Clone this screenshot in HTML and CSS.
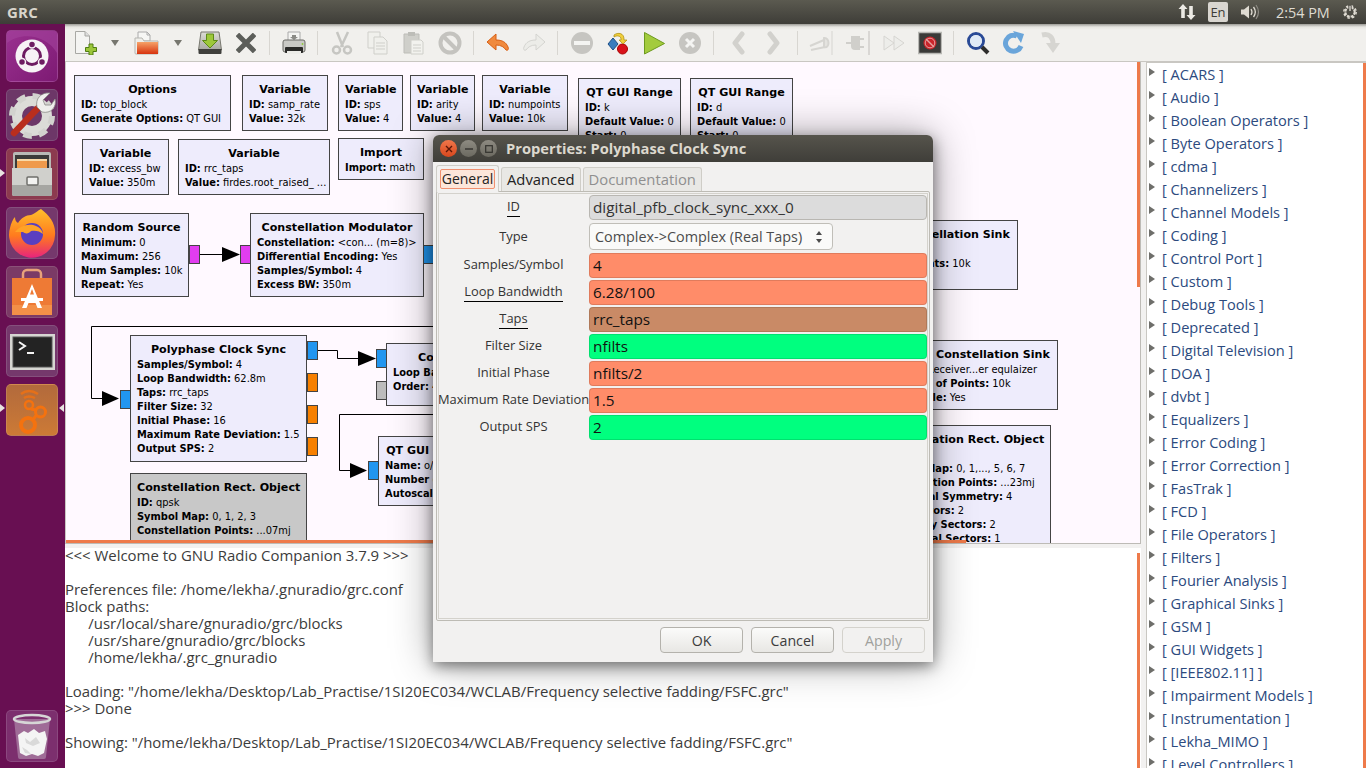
FILE: index.html
```html
<!DOCTYPE html>
<html lang="en">
<head>
<meta charset="utf-8">
<title>GRC</title>
<link rel="stylesheet" href="styles.css">
</head>
<body>
<div class="screen">
  <header class="topbar">
    <span class="app-name">GRC</span>
    <div class="tray">
      <svg class="tray-net" width="18" height="18" viewBox="0 0 18 18"><path d="M5 1 L9.5 6 H6.800 V15 H3.200 V6 H.5z M13 17 L8.500 12 H11.200 V3 H14.800 V12 H17.500z" fill="#eceae4"/></svg>
      <span class="tray-lang">En</span>
      <svg class="tray-vol" width="20" height="18" viewBox="0 0 20 18"><path d="M1 6.500h3l5-4v13l-5-4H1z" fill="#dfdbd2"/><path d="M11 6c1.300 2 1.300 4 0 6M13.500 4c2.200 3 2.200 7 0 10" fill="none" stroke="#dfdbd2" stroke-width="1.300"/><path d="M16 2c3.200 4.500 3.200 9.500 0 14" fill="none" stroke="#8e8b84" stroke-width="1.200"/></svg>
      <span class="tray-time">2:54 PM</span>
      <svg class="tray-gear" width="16" height="18" viewBox="0 0 18 18"><circle cx="9" cy="9" r="5.300" fill="none" stroke="#dfdbd2" stroke-width="2.400" stroke-dasharray="3.200 1"/><circle cx="9" cy="9" r="7" fill="none" stroke="#dfdbd2" stroke-width="1.600" stroke-dasharray="2.800 2.700"/><path d="M9 1v7" stroke="#4a4943" stroke-width="3.600"/><path d="M9 2v6" stroke="#dfdbd2" stroke-width="1.500"/></svg>
    </div>
  </header>

  <div class="desktop">
    <nav class="launcher">
      <div class="tile tile-bfb"><svg width="50" height="50" viewBox="0 0 50 50"><path d="M0 12C14 0 40 4 50 22V0H0z" fill="#a4429c" opacity=".6"/><circle cx="25" cy="25" r="16.500" fill="#f7f3f6"/><circle cx="25" cy="25" r="8.500" fill="none" stroke="#6e1c62" stroke-width="3"/><g fill="#6e1c62" stroke="#f7f3f6" stroke-width="1.500"><circle cx="25" cy="13.500" r="3.500"/><circle cx="15" cy="31" r="3.500"/><circle cx="35" cy="31" r="3.500"/></g></svg></div>
      <div class="tile tile-set"><svg width="50" height="50" viewBox="0 0 50 50"><circle cx="25" cy="26" r="15" fill="none" stroke="#dcdcd8" stroke-width="10"/><circle cx="25" cy="26" r="20" fill="none" stroke="#d2d2ce" stroke-width="6" stroke-dasharray="8.500 7.200"/><path d="M7 43 L33 16" stroke="#b92e1e" stroke-width="6.500" stroke-linecap="round"/><path d="M30 17C28 9 34 2 43 3L36 10L38 15L44 15L48 9C50 17 44 24 35 22z" fill="#efefec" stroke="#8c8c88" stroke-width=".8"/></svg></div>
      <div class="tile tile-files"><svg width="50" height="50" viewBox="0 0 50 50"><rect x="6" y="3" width="38" height="44" rx="2" fill="#b9b9b5"/><rect x="8" y="6" width="34" height="14" fill="#3c3b39"/><path d="M10 12h30v9H10z" fill="#ef9a4c"/><path d="M10 10h30v2H10z" fill="#f9d9a8"/><path d="M5 19h40v26a2 2 0 0 1-2 2H7a2 2 0 0 1-2-2z" fill="#d0d0cc"/><path d="M5 36h40v9a2 2 0 0 1-2 2H7a2 2 0 0 1-2-2z" fill="#a6a6a2"/><rect x="20" y="28" width="11" height="8" rx="1" fill="#f2f2f0" stroke="#6f6f6b" stroke-width="1.500"/></svg></div>
      <div class="tile tile-ff"><svg width="50" height="50" viewBox="0 0 50 50"><defs><linearGradient id="ffg" x1="0" y1="0" x2="0" y2="1"><stop offset="0" stop-color="#ffc02c"/><stop offset=".55" stop-color="#ff7a1e"/><stop offset="1" stop-color="#e7247c"/></linearGradient></defs><path d="M34 1c9 7 15 15 14 26A23 23 0 1 1 3 20c1-5 3-9 5-11 0 3 1 5 3 6 3-5 8-8 13-8 5-2 9-6 10-6z" fill="url(#ffg)"/><circle cx="25" cy="26" r="11" fill="#5a3fc0"/><path d="M8 24c4-5 10-8 18-7 5 1 9 4 10 9-3-3-8-4-12-3-2 3-6 3-8 1z" fill="#ffa326"/></svg></div>
      <div class="tile tile-soft"><svg width="50" height="50" viewBox="0 0 50 50"><path d="M16 13V7a4 4 0 0 1 4-4h10a4 4 0 0 1 4 4v6" fill="none" stroke="#e8a27a" stroke-width="2.500"/><path d="M5 11h40v37H5z" fill="#ee7a35"/><path d="M5 38h40v10H5z" fill="#f39048"/><path d="M25 17L35 41H30.500L28.500 36H21.500L19.500 41H15z" fill="#fff"/><path d="M14 31h22v3H14z" fill="#fff"/><path d="M23 27.500h4L25 22z" fill="#ee7a35"/></svg></div>
      <div class="tile tile-term"><svg width="50" height="50" viewBox="0 0 50 50"><rect x="3" y="8" width="45" height="36" fill="#d6d6d2"/><rect x="6" y="11" width="39" height="30" fill="#232323" stroke="#555" stroke-width="1"/><path d="M12 16l6 4-6 4" fill="none" stroke="#f4f4f4" stroke-width="2"/><path d="M20 27h7" stroke="#f4f4f4" stroke-width="2"/></svg></div>
      <div class="tile tile-grc"><svg width="50" height="50" viewBox="0 0 50 50" fill="none" stroke="#f4720f"><circle cx="22" cy="20" r="4" stroke-width="2.500"/><circle cx="33.500" cy="27" r="5" stroke-width="3"/><circle cx="21" cy="40" r="7" stroke-width="4"/><path d="M25 36L29.500 30M24 24L29 25" stroke-width="3"/><path d="M14 9c5-4 11-4 17 0M17 13c3-2 7-2 11 0" stroke-width="2.500" opacity=".75"/></svg></div>
      <div class="tile tile-trash"><svg width="50" height="50" viewBox="0 0 50 50"><path d="M7 8h36l-4 38a2 2 0 0 1-2 2H13a2 2 0 0 1-2-2z" fill="#c9b8c9" opacity=".45"/><ellipse cx="25" cy="8" rx="18" ry="4" fill="none" stroke="#d6d6d6" stroke-width="2.500"/><path d="M11 24l6-4 4 2 6-4 5 4 6-2 2 8-3 14-6 3-6-2-6 2-6-3z" fill="#f4f4f4"/><path d="M18 27l5 4 6-5 4 6-7 3-7-3zM15 36l5 3 4 4-6-1z" fill="#d9d9d9"/></svg></div>
      <span class="pip pip-files"></span>
      <span class="pip pip-grc"></span>
      <span class="pip-right"></span>
    </nav>

    <main class="window">
      <div class="toolbar">
        <button class="tb"><svg width="24" height="24" viewBox="0 0 24 24"><path d="M1.500 0.500H11L15.500 5V22.500H1.500z" fill="#f4f4f2" stroke="#a8a8a4"/><path d="M11 .5V5h4.500" fill="#ddd" stroke="#a8a8a4"/><path d="M15 13h4v3.500h3.500v4H19V24h-4v-3.500h-3.500v-4H15z" fill="#9cc63a" stroke="#4f7d12"/></svg></button>
        <span class="dd"></span>
        <button class="tb tb-open"><svg width="26" height="24" viewBox="0 0 26 24"><path d="M4 1h9l3 3v6H4z" fill="#f6f6f4" stroke="#aaa"/><path d="M13 1v3h3" fill="none" stroke="#aaa"/><path d="M1 7h7l2 3h14v12a1 1 0 0 1-1 1H2a1 1 0 0 1-1-1z" fill="#efeeea" stroke="#b5b5b0"/><defs><linearGradient id="og" x1="0" y1="0" x2="0" y2="1"><stop offset="0" stop-color="#f6a268"/><stop offset="1" stop-color="#d7330e"/></linearGradient></defs><rect x="3" y="11" width="21" height="12" fill="url(#og)"/></svg></button>
        <span class="dd dd-2"></span>
        <button class="tb tb-save"><svg width="24" height="24" viewBox="0 0 24 24"><defs><linearGradient id="dg" x1="0" y1="0" x2="0" y2="1"><stop offset="0" stop-color="#dcdcd6"/><stop offset="1" stop-color="#a8a8a2"/></linearGradient></defs><path d="M3 1h18l2.500 18H.5z" fill="url(#dg)" stroke="#77776f"/><path d="M.5 18h23v4a1 1 0 0 1-1 1h-21a1 1 0 0 1-1-1z" fill="#3f3f3c"/><path d="M8.500 3h7v6.500h4L12 17 4.500 9.500h4z" fill="#9dc83a" stroke="#5c8a16"/></svg></button>
        <button class="tb"><svg width="20" height="20" viewBox="0 0 22 22"><path d="M3.500 3.500L18.500 18.500M18.500 3.500L3.500 18.500" stroke="#5c5e5a" stroke-width="5.500" stroke-linecap="square"/></svg></button>
        <i class="sep"></i>
        <button class="tb"><svg width="24" height="24" viewBox="0 0 24 24"><path d="M6 1h12v9H6z" fill="#f4f4f2" stroke="#aaa"/><path d="M10 4h4v2h2l-4 3-4-3h2z" fill="#8a8a86"/><path d="M3 9h18a2 2 0 0 1 2 2v8a2 2 0 0 1-2 2H3a2 2 0 0 1-2-2v-8a2 2 0 0 1 2-2z" fill="#c9c9c5" stroke="#6b6b66"/><rect x="3" y="16" width="18" height="6" rx="1" fill="#2a2a28"/><rect x="5" y="20" width="14" height="3" fill="#ecece8"/><circle cx="20.500" cy="13" r=".9" fill="#8ecb3a"/></svg></button>
        <i class="sep"></i>
        <button class="tb"><svg width="24" height="24" viewBox="0 0 24 24" fill="none" stroke="#c6c6c2" stroke-width="2.500"><path d="M7 1l6 15M18 1L11 16"/><circle cx="6.500" cy="19" r="3.500"/><circle cx="17.500" cy="19" r="3.500"/></svg></button>
        <button class="tb"><svg width="24" height="24" viewBox="0 0 24 24" fill="#f0f0ec" stroke="#cfcfca"><path d="M2 1h12v16H2z"/><path d="M8 6h9l4 4v13H8z"/><path d="M10 12h9M10 15h9M10 18h9" fill="none"/></svg></button>
        <button class="tb"><svg width="24" height="24" viewBox="0 0 24 24"><path d="M2 3h15v19H2z" fill="#cfcfca" stroke="#bdbdb8"/><rect x="6" y="1" width="7" height="4" fill="#bdbdb8"/><path d="M9 9h10l2 2v12H9z" fill="#f2f2ee" stroke="#cfcfca"/><path d="M11 14h8M11 17h8M11 20h8" stroke="#cfcfca"/></svg></button>
        <button class="tb"><svg width="24" height="24" viewBox="0 0 24 24" fill="none" stroke="#c4c3bf" stroke-width="4"><circle cx="12" cy="12" r="9.500"/><path d="M5.500 5.500L18.500 18.500"/></svg></button>
        <i class="sep"></i>
        <button class="tb"><svg width="24" height="24" viewBox="0 0 24 24"><path d="M10 3L1 11l9 8v-5c5 0 8 2 10 5 2 1 3-1 2-3-2-5-6-7-12-7z" fill="#f08a3e" stroke="#d85f14" stroke-linejoin="round"/></svg></button>
        <button class="tb"><svg width="24" height="24" viewBox="0 0 24 24"><path d="M14 3l9 8-9 8v-5c-5 0-8 2-10 5-2 1-3-1-2-3 2-5 6-7 12-7z" fill="#ecece8" stroke="#d4d4d0" stroke-linejoin="round"/></svg></button>
        <i class="sep"></i>
        <button class="tb"><svg width="24" height="24" viewBox="0 0 24 24"><circle cx="12" cy="12" r="11" fill="#c6c5c1"/><rect x="4" y="10" width="16" height="4" fill="#f4f4f2"/></svg></button>
        <button class="tb"><svg width="24" height="24" viewBox="0 0 24 24"><path d="M7 7l5 6-5 6-5-6z" fill="#3a7dbd" stroke="#1f4f86"/><circle cx="16.500" cy="18" r="5" fill="#d8121a" stroke="#a00"/><path d="M8 4c4-3 10-2 10 4v1h3l-4 4-4-4h2V8c0-3-4-4-7-2z" fill="#f0cf3c" stroke="#a78a10" stroke-width=".7"/></svg></button>
        <button class="tb"><svg width="24" height="24" viewBox="0 0 24 24"><path d="M2.500 1.500L22.500 12.500 2.500 23z" fill="#a3cb3d" stroke="#6d9a1e"/></svg></button>
        <button class="tb"><svg width="24" height="24" viewBox="0 0 24 24"><circle cx="12" cy="12" r="11" fill="#c6c5c1"/><path d="M8 8l8 8M16 8l-8 8" stroke="#f4f4f2" stroke-width="3"/></svg></button>
        <i class="sep"></i>
        <button class="tb"><svg width="24" height="24" viewBox="0 0 24 24"><path d="M16 3L9 12l7 9" fill="none" stroke="#d2d1cd" stroke-width="5" stroke-linecap="round" stroke-linejoin="round"/></svg></button>
        <button class="tb"><svg width="24" height="24" viewBox="0 0 24 24"><path d="M8 3l7 9-7 9" fill="none" stroke="#d2d1cd" stroke-width="5" stroke-linecap="round" stroke-linejoin="round"/></svg></button>
        <i class="sep"></i>
        <button class="tb"><svg width="26" height="24" viewBox="0 0 26 24" fill="none" stroke="#d6d5d1" stroke-width="2"><path d="M1 15l14-6M2 19l14-3"/><path d="M15 7c6-1 6 11 0 9z" fill="#e4e3df"/><path d="M23 0v24" stroke-width="1"/></svg></button>
        <button class="tb"><svg width="26" height="24" viewBox="0 0 26 24" fill="none" stroke="#d0cfcb" stroke-width="2"><path d="M1 12h6M14 8h5M14 16h5"/><path d="M7 6h7v12H10a3 3 0 0 1-3-3z" fill="#d0cfcb"/><path d="M24 0v24" stroke-width="1.500"/></svg></button>
        <button class="tb"><svg width="24" height="24" viewBox="0 0 24 24" fill="#ededea" stroke="#d6d5d1"><path d="M2 5l10 7-10 7zM12 5l10 7-10 7z"/></svg></button>
        <button class="tb"><svg width="24" height="24" viewBox="0 0 24 24"><rect x=".5" y="1.500" width="23" height="21" fill="#3a3a38" stroke="#b8b8b4" stroke-width="1.500"/><circle cx="12" cy="12" r="6.500" fill="#c9242a"/><path d="M8 8l8 8" stroke="#e5a0a0" stroke-width="1.500"/><circle cx="12" cy="12" r="4.800" fill="none" stroke="#e5a0a0" stroke-width="1"/></svg></button>
        <i class="sep"></i>
        <button class="tb"><svg width="24" height="24" viewBox="0 0 24 24" fill="none"><circle cx="10" cy="10" r="7.500" stroke="#2a4a96" stroke-width="3"/><circle cx="10" cy="10" r="6" fill="#dfe9f5"/><path d="M16 16l6 6" stroke="#2e2e2c" stroke-width="4"/></svg></button>
        <button class="tb"><svg width="24" height="24" viewBox="0 0 24 24" fill="none"><path d="M19 15a8 8 0 1 1-4-10" stroke="#6aa5da" stroke-width="5"/><path d="M11 0l11 3-3 9z" fill="#6aa5da"/></svg></button>
        <button class="tb"><svg width="24" height="24" viewBox="0 0 24 24" fill="none"><path d="M4 4c8-2 11 3 11 9" stroke="#d6d5d1" stroke-width="5"/><path d="M8 12h14l-7 10z" fill="#d6d5d1"/></svg></button>
      </div>

      <div class="panes">
        <div class="left">
          <div class="canvas">
            <svg class="wires" width="1072" height="480" viewBox="0 0 1072 480">
              <g fill="none" stroke="#000" stroke-width="1">
                <path d="M133 192.500H160"/>
                <path d="M367 264.500H25.500V336.500H40"/>
                <path d="M251 288.500H271.500V296.500H296"/>
                <path d="M367 352.500H273.500V408.500H290"/>
              </g>
              <g fill="#000">
                <path d="M156 185L174 192.500 156 200z"/>
                <path d="M36 329L53 336.500 36 344z"/>
                <path d="M292 289L310 296.500 292 304z"/>
                <path d="M284 401L301 408.500 284 416z"/>
              </g>
            </svg>
            <section class="block b-opt"><h4>Options</h4><p><b>ID:</b> top_block</p><p><b>Generate Options:</b> QT GUI</p></section>
            <section class="block b-samp"><h4>Variable</h4><p><b>ID:</b> samp_rate</p><p><b>Value:</b> 32k</p></section>
            <section class="block b-sps"><h4>Variable</h4><p><b>ID:</b> sps</p><p><b>Value:</b> 4</p></section>
            <section class="block b-arity"><h4>Variable</h4><p><b>ID:</b> arity</p><p><b>Value:</b> 4</p></section>
            <section class="block b-nump"><h4>Variable</h4><p><b>ID:</b> numpoints</p><p><b>Value:</b> 10k</p></section>
            <section class="block b-rk"><h4>QT GUI Range</h4><p><b>ID:</b> k</p><p><b>Default Value:</b> 0</p><p><b>Start:</b> 0</p></section>
            <section class="block b-rd"><h4>QT GUI Range</h4><p><b>ID:</b> d</p><p><b>Default Value:</b> 0</p><p><b>Start:</b> 0</p></section>
            <section class="block b-ex"><h4>Variable</h4><p><b>ID:</b> excess_bw</p><p><b>Value:</b> 350m</p></section>
            <section class="block b-rrc"><h4>Variable</h4><p><b>ID:</b> rrc_taps</p><p><b>Value:</b> firdes.root_raised_ ...</p></section>
            <section class="block b-imp"><h4>Import</h4><p><b>Import:</b> math</p></section>
            <section class="block b-rand"><h4>Random Source</h4><p><b>Minimum:</b> 0</p><p><b>Maximum:</b> 256</p><p><b>Num Samples:</b> 10k</p><p><b>Repeat:</b> Yes</p></section>
            <section class="block b-mod"><h4>Constellation Modulator</h4><p><b>Constellation:</b> &lt;con... (m=8)&gt;</p><p><b>Differential Encoding:</b> Yes</p><p><b>Samples/Symbol:</b> 4</p><p><b>Excess BW:</b> 350m</p></section>
            <section class="block b-poly"><h4>Polyphase Clock Sync</h4><p><b>Samples/Symbol:</b> 4</p><p><b>Loop Bandwidth:</b> 62.8m</p><p><b>Taps:</b> rrc_taps</p><p><b>Filter Size:</b> 32</p><p><b>Initial Phase:</b> 16</p><p><b>Maximum Rate Deviation:</b> 1.5</p><p><b>Output SPS:</b> 2</p></section>
            <section class="block gray b-qpsk"><h4>Constellation Rect. Object</h4><p><b>ID:</b> qpsk</p><p><b>Symbol Map:</b> 0, 1, 2, 3</p><p><b>Constellation Points:</b> ...07mj</p><p><b>Rotational Symmetry:</b> 4</p></section>
            <section class="block b-cos"><h4>Costas Loop</h4><p><b>Loop Bandwidth:</b> 62.8m</p><p><b>Order:</b> 4</p></section>
            <section class="block b-qt"><h4>QT GUI Constellation Sink</h4><p><b>Name:</b> o/p</p><p><b>Number of Points:</b> 10k</p><p><b>Autoscale:</b> Yes</p></section>
            <section class="block b-s1"><h4>QT GUI Constellation Sink</h4><p><b>Name:</b> input</p><p><b>Number of Points:</b> 10k</p><p><b>Autoscale:</b> Yes</p></section>
            <section class="block b-s2"><h4>QT GUI Constellation Sink</h4><p><b>Name:</b> Receiver...er equlaizer</p><p><b>Number of Points:</b> 10k</p><p><b>Autoscale:</b> Yes</p></section>
            <section class="block b-r2"><h4>Constellation Rect. Object</h4><p><b>ID:</b> 8psk</p><p><b>Symbol Map:</b> 0, 1,..., 5, 6, 7</p><p><b>Constellation Points:</b> ...23mj</p><p><b>Rotational Symmetry:</b> 4</p><p><b>Real Sectors:</b> 2</p><p><b>Imaginary Sectors:</b> 2</p><p><b>Width Real Sectors:</b> 1</p></section>
            <span class="port magenta p1"></span>
            <span class="port magenta p2"></span>
            <span class="port blue p3"></span>
            <span class="port blue p4"></span>
            <span class="port blue p5"></span>
            <span class="port orange p6"></span>
            <span class="port orange p7"></span>
            <span class="port orange p8"></span>
            <span class="port blue p9"></span>
            <span class="port grey p10"></span>
            <span class="port blue p11"></span>
            <span class="hthumb"></span>
            <span class="vthumb"></span>
          </div>
          <div class="log">
<pre>&lt;&lt;&lt; Welcome to GNU Radio Companion 3.7.9 &gt;&gt;&gt;

Preferences file: /home/lekha/.gnuradio/grc.conf
Block paths:
      /usr/local/share/gnuradio/grc/blocks
      /usr/share/gnuradio/grc/blocks
      /home/lekha/.grc_gnuradio

Loading: "/home/lekha/Desktop/Lab_Practise/1SI20EC034/WCLAB/Frequency selective fadding/FSFC.grc"
&gt;&gt;&gt; Done

Showing: "/home/lekha/Desktop/Lab_Practise/1SI20EC034/WCLAB/Frequency selective fadding/FSFC.grc"</pre>
            <span class="logthumb"></span>
          </div>
        </div>
        <aside class="tree">
          <ul>
            <li>[ ACARS ]</li><li>[ Audio ]</li><li>[ Boolean Operators ]</li><li>[ Byte Operators ]</li><li>[ cdma ]</li><li>[ Channelizers ]</li><li>[ Channel Models ]</li><li>[ Coding ]</li><li>[ Control Port ]</li><li>[ Custom ]</li><li>[ Debug Tools ]</li><li>[ Deprecated ]</li><li>[ Digital Television ]</li><li>[ DOA ]</li><li>[ dvbt ]</li><li>[ Equalizers ]</li><li>[ Error Coding ]</li><li>[ Error Correction ]</li><li>[ FasTrak ]</li><li>[ FCD ]</li><li>[ File Operators ]</li><li>[ Filters ]</li><li>[ Fourier Analysis ]</li><li>[ Graphical Sinks ]</li><li>[ GSM ]</li><li>[ GUI Widgets ]</li><li>[ [IEEE802.11] ]</li><li>[ Impairment Models ]</li><li>[ Instrumentation ]</li><li>[ Lekha_MIMO ]</li><li>[ Level Controllers ]</li>
          </ul>
          <span class="treethumb"></span>
        </aside>
      </div>
    </main>
  </div>

  <div class="dialog">
    <div class="dlg-title">
      <span class="wb wb-close"><svg width="8" height="8" viewBox="0 0 8 8"><path d="M1 1l6 6M7 1L1 7" stroke="#5a1608" stroke-width="1.400"/></svg></span>
      <span class="wb"><svg width="8" height="8" viewBox="0 0 8 8"><path d="M0 4h8" stroke="#33322e" stroke-width="1.400"/></svg></span>
      <span class="wb"><svg width="8" height="8" viewBox="0 0 8 8"><rect x=".7" y=".7" width="6.600" height="6.600" fill="none" stroke="#33322e" stroke-width="1.200"/></svg></span>
      <span class="dlg-name">Properties: Polyphase Clock Sync</span>
    </div>
    <div class="dlg-body">
      <div class="tabs">
        <div class="tab tab-on"><span class="focus">General</span></div>
        <div class="tab">Advanced</div>
        <div class="tab tab-off">Documentation</div>
      </div>
      <div class="pane">
        <div class="form">
          <label class="lbl"><u class="ul">ID</u></label><div class="entry e-id">digital_pfb_clock_sync_xxx_0</div>
          <label class="lbl lbl-type">Type</label><div class="combo"><span>Complex-&gt;Complex (Real Taps)</span><svg width="8" height="14" viewBox="0 0 8 14"><path d="M4 1l3 4H1zM4 13l3-4H1z" fill="#4c4c4c"/></svg></div>
          <label class="lbl">Samples/Symbol</label><div class="entry e-float">4</div>
          <label class="lbl"><u class="ul">Loop Bandwidth</u></label><div class="entry e-float">6.28/100</div>
          <label class="lbl"><u class="ul">Taps</u></label><div class="entry e-taps">rrc_taps</div>
          <label class="lbl">Filter Size</label><div class="entry e-int">nfilts</div>
          <label class="lbl">Initial Phase</label><div class="entry e-float">nfilts/2</div>
          <label class="lbl">Maximum Rate Deviation</label><div class="entry e-float">1.5</div>
          <label class="lbl">Output SPS</label><div class="entry e-int">2</div>
        </div>
      </div>
      <div class="actions">
        <button class="btn">OK</button>
        <button class="btn">Cancel</button>
        <button class="btn btn-off">Apply</button>
      </div>
    </div>
  </div>
</div>
</body>
</html>
```
FILE: styles.css
```css
* { box-sizing: border-box; }
html, body { margin: 0; padding: 0; }
body { background: #000; font-family: "Open Sans", "Noto Sans", sans-serif; }
.screen { position: relative; width: 1366px; height: 768px; overflow: hidden; display: flex; flex-direction: column; }

/* top bar */
.topbar { height: 24px; flex: none; display: flex; align-items: center; background: linear-gradient(#5b5a50, #3e3d38); padding-left: 7px; color: #dfdbd2; }
.app-name { font: bold 15px "Open Sans", sans-serif; color: #d9d5cb; letter-spacing: .2px; }
.tray { margin-left: auto; display: flex; align-items: center; }
.tray-net { margin-right: 12px; }
.tray-lang { width: 20px; height: 20px; border-radius: 2px; background: #d9d6d0; color: #3c3b37; font: 13px/20px "Open Sans", sans-serif; text-align: center; margin-right: 12px; }
.tray-vol { margin-right: 16px; }
.tray-time { font: 14.400px "Open Sans", sans-serif; width: 54px; margin-right: 12px; white-space: nowrap; }
.tray-gear { margin-right: 8px; }

/* launcher */
.desktop { flex: 1; min-height: 0; display: flex; }
.launcher { position: relative; width: 65px; flex: none; background: #680f52; display: flex; flex-direction: column; gap: 7px; padding: 6px 7px 6px 6px; }
.tile { width: 52px; height: 52px; border-radius: 5px; border: 1px solid rgba(255,255,255,.12); overflow: hidden; }
.tile svg { display: block; }
.tile-bfb { background: linear-gradient(135deg, #9a3190, #7d1a73); }
.tile-set { background: #6d3768; }
.tile-files { background: #8c3a4f; }
.tile-ff { background: #75386c; }
.tile-soft { background: #7b3a66; }
.tile-term { background: #75386c; }
.tile-grc { background: linear-gradient(#b26a3c, #cc7a36); }
.tile-trash { background: #7c2f6e; margin-top: auto; }
.pip { position: absolute; left: 0; width: 0; height: 0; border-left: 5px solid #e8e4e0; border-top: 4px solid transparent; border-bottom: 4px solid transparent; }
.pip-files { top: 145px; }
.pip-grc { top: 380px; }
.pip-right { position: absolute; top: 380px; left: 59px; width: 0; height: 0; border-right: 5px solid #e8e4e0; border-top: 4px solid transparent; border-bottom: 4px solid transparent; }

/* window */
.window { flex: 1; min-width: 0; display: flex; flex-direction: column; background: #f2f1f0; }
.toolbar { height: 38px; flex: none; display: flex; align-items: center; padding-left: 3px; background: linear-gradient(#9b9a95 0, #e6e5e1 3px, #f1f0ed 6px); border-bottom: 1px solid #c9c7c2; }
.tb { width: 36px; height: 32px; flex: none; padding: 0; border: 0; background: none; display: flex; align-items: center; justify-content: center; margin-top: 1px; }
.tb svg { display: block; flex: none; }
.tb-open { margin-left: 3px; }
.tb-save { margin-left: 3px; }
.dd { width: 22px; height: 6px; flex: none; position: relative; }
.dd::after { content: ""; position: absolute; left: 7px; top: 0; border-left: 4px solid transparent; border-right: 4px solid transparent; border-top: 6px solid #77776f; }
.dd-2 { margin-left: 2px; }
.sep { width: 1px; height: 24px; flex: none; background: #d8d6d1; margin: 0 6px 0 5px; }
.panes { flex: 1; min-height: 0; display: flex; }
.left { width: 1076px; flex: none; display: flex; flex-direction: column; }
.canvas { position: relative; height: 482px; flex: none; overflow: hidden; background: #fff9ff; border-left: 1px solid #c9c7c2; border-right: 1px solid #bdbbb6; border-bottom: 1px solid #bdbbb6; }
.wires { position: absolute; left: 0; top: 0; }

.block { position: absolute; background: #eeecfc; border: 1px solid #444; padding: 6px 6px 0; font: 9.900px/14px "DejaVu Sans", sans-serif; color: #000; overflow: hidden; white-space: nowrap; }
.block h4 { margin: 0; font: bold 11.100px/16px "DejaVu Sans", sans-serif; text-align: center; }
.block p { margin: 0; }
.gray { background: #c8c8c8; }
.b-opt { left: 8px; top: 13px; width: 157px; height: 56px; }
.b-samp { left: 176px; top: 13px; width: 86px; height: 56px; }
.b-sps { left: 272px; top: 13px; width: 65px; height: 56px; }
.b-arity { left: 344px; top: 13px; width: 65px; height: 56px; }
.b-nump { left: 416px; top: 13px; width: 86px; height: 56px; }
.b-rk { left: 512px; top: 16px; width: 103px; height: 90px; }
.b-rd { left: 624px; top: 16px; width: 103px; height: 90px; }
.b-ex { left: 16px; top: 77px; width: 87px; height: 56px; }
.b-rrc { left: 112px; top: 77px; width: 152px; height: 56px; }
.b-imp { left: 272px; top: 76px; width: 86px; height: 42px; }
.b-rand { left: 8px; top: 151px; width: 115px; height: 84px; }
.b-mod { left: 184px; top: 151px; width: 174px; height: 84px; }
.b-poly { left: 64px; top: 273px; width: 177px; height: 127px; }
.b-qpsk { left: 64px; top: 411px; width: 177px; height: 100px; }
.b-cos { left: 320px; top: 281px; width: 140px; height: 63px; }
.b-qt { left: 312px; top: 374px; width: 177px; height: 70px; }
.b-s1 { left: 775px; top: 158px; width: 177px; height: 70px; }
.b-s2 { left: 815px; top: 278px; width: 177px; height: 70px; }
.b-r2 { left: 808px; top: 363px; width: 177px; height: 130px; }

.port { position: absolute; width: 11px; height: 19px; border: 1px solid #444; }
.magenta { background: #e23df0; }
.blue { background: #2196f0; }
.orange { background: #f78000; }
.grey { background: #bcbcbc; }
.p1 { left: 123px; top: 183px; }
.p2 { left: 174px; top: 183px; }
.p3 { left: 357px; top: 183px; }
.p4 { left: 241px; top: 279px; }
.p5 { left: 54px; top: 328px; }
.p6 { left: 241px; top: 311px; }
.p7 { left: 241px; top: 343px; }
.p8 { left: 241px; top: 375px; }
.p9 { left: 310px; top: 287px; }
.p10 { left: 310px; top: 319px; }
.p11 { left: 302px; top: 399px; }
.hthumb { position: absolute; left: 0; bottom: 0; width: 900px; height: 3px; background: #ee7a4a; }
.vthumb { position: absolute; right: 0; top: 0; width: 3px; height: 225px; background: #ee7a4a; }

.log { position: relative; flex: 1; min-height: 0; margin-top: 4px; background: #fff; overflow: hidden; }
.log pre { margin: -1px 0 0; font: 14.950px/17px "Open Sans", sans-serif; color: #3c3c3c; white-space: pre; }
.logthumb { position: absolute; right: 1px; top: 5px; bottom: 0; width: 3px; background: #ee7a4a; }

.tree { position: relative; flex: 1; margin-left: 5px; background: #fff; border: 1px solid #c9c7c2; border-width: 1px 0 0 1px; overflow: hidden; }
.tree ul { margin: 0; padding: 0; list-style: none; }
.tree li { position: relative; height: 23px; padding-left: 15px; font: 14.600px/23px "Open Sans", sans-serif; color: #2c4a7e; white-space: nowrap; }
.tree li::before { content: ""; position: absolute; left: 2px; top: 5px; border-left: 6px solid #6e6e6a; border-top: 4px solid transparent; border-bottom: 4px solid transparent; }
.treethumb { position: absolute; right: 0; top: 0; bottom: 0; width: 3px; background: #ee7a4a; }

/* dialog */
.dialog { position: absolute; left: 433px; top: 135px; width: 500px; height: 527px; display: flex; flex-direction: column; border-radius: 6px 6px 0 0; box-shadow: 0 0 42px rgba(0,0,0,.38), 0 4px 14px rgba(0,0,0,.45); }
.dlg-title { height: 27px; flex: none; display: flex; align-items: center; padding-left: 7px; gap: 3px; border-radius: 6px 6px 0 0; background: linear-gradient(#56544c, #3f3e39); }
.wb { width: 17px; height: 17px; border-radius: 50%; background: linear-gradient(#8e8b82, #6b6960); display: flex; align-items: center; justify-content: center; }
.wb-close { background: linear-gradient(#f0764a, #d9481e); }
.dlg-name { margin-left: 6px; padding-bottom: 2px; font: bold 14.700px "Open Sans", sans-serif; color: #dcd8ce; white-space: nowrap; }
.dlg-body { flex: 1; min-height: 0; display: flex; flex-direction: column; background: #f2f1f0; padding: 3px 3px 0; }
.tabs { height: 26px; flex: none; display: flex; align-items: flex-end; gap: 2px; }
.tab { height: 24px; padding: 0 5px; border: 1px solid #cfcdc7; border-bottom: 0; border-radius: 3px 3px 0 0; background: #e9e8e5; font: 14.800px/22px "Open Sans", sans-serif; color: #222; }
.tab-on { height: 27px; width: 63px; padding: 3px 3px 0; background: #f2f1f0; margin-bottom: -1px; position: relative; }
.focus { display: block; height: 20px; font-size: 14px; line-height: 18px; text-align: center; color: #222; background: #fce6da; border: 1px solid #f09070; border-radius: 2px; }
.tab-off { color: #8f8f8f; }
.pane { height: 430px; flex: none; border: 1px solid #bdbbb4; border-radius: 2px; outline: 1px solid #d4d2cc; outline-offset: -3px; padding: 3px 3px 0 1px; }
.form { display: grid; grid-template-columns: 151px 338px; grid-template-rows: 25px 29px repeat(7, 25px); row-gap: 2px; }
.lbl { font: 12.900px/22px "Open Sans", sans-serif; color: #333; text-align: center; white-space: nowrap; }
.lbl-type { line-height: 28px; }
.ul { text-decoration: none; border-bottom: 1px solid #000; padding-bottom: 1px; }
.entry { height: 25px; border-radius: 4px; border: 1px solid rgba(0,0,0,.12); padding-left: 3px; font: 15.300px/22px "Open Sans", sans-serif; color: #111; white-space: nowrap; }
.e-id { background: #dcdcdc; border-color: #b9b7b2; color: #333; }
.e-float { background: #ff8c69; }
.e-taps { background: #c98a66; }
.e-int { background: #00ff7f; }
.combo { width: 244px; height: 27px; margin-top: 1px; border-radius: 4px; border: 1px solid #c0beb8; background: #fafaf9; display: flex; align-items: center; justify-content: space-between; padding: 0 9px 0 5px; font: 14.400px "Open Sans", sans-serif; color: #4c4c4c; white-space: nowrap; }
.actions { display: flex; justify-content: flex-end; gap: 8px; padding: 6px 5px 0 0; }
.btn { width: 83px; height: 26px; padding: 0; border: 1px solid #b4b2ac; border-radius: 4px; background: linear-gradient(#fbfbfa, #e8e7e4); font: 14.200px "Open Sans", sans-serif; color: #3c3c3c; }
.btn-off { color: #a0a09c; border-color: #d4d2cc; background: #f2f1f0; }
```
